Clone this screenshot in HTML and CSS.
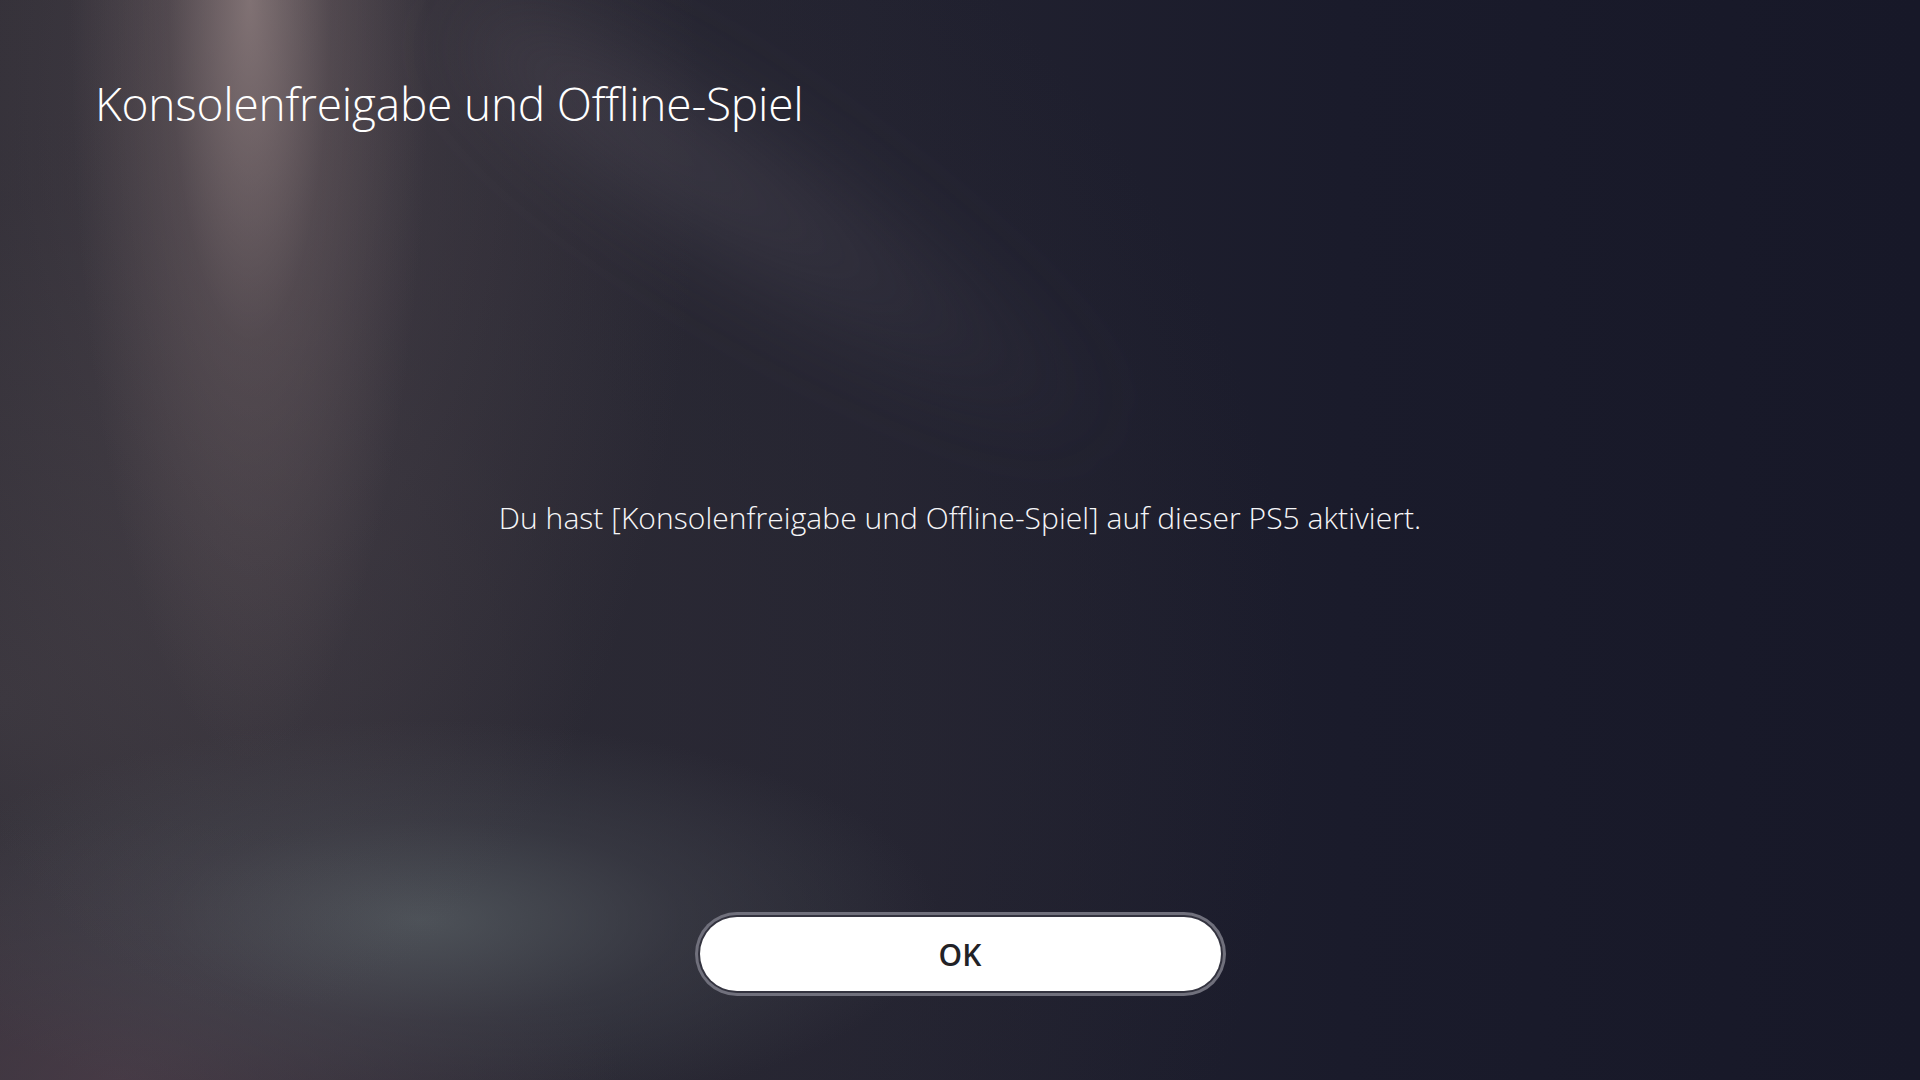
FILE: index.html
```html
<!DOCTYPE html>
<html lang="de">
<head>
<meta charset="utf-8">
<title>Konsolenfreigabe und Offline-Spiel</title>
<link rel="stylesheet" href="styles.css">
</head>
<body>
<div class="screen">
  <header class="header">
    <h1 class="title">Konsolenfreigabe und Offline-Spiel</h1>
  </header>
  <main class="content">
    <p class="message">Du hast [Konsolenfreigabe und Offline-Spiel] auf dieser PS5 aktiviert.</p>
  </main>
  <footer class="actions">
    <button class="ok-button" type="button">OK</button>
  </footer>
</div>
</body>
</html>
```

FILE: styles.css
```css
html, body {
  margin: 0;
  padding: 0;
  width: 1920px;
  height: 1080px;
  overflow: hidden;
}

body {
  position: relative;
  background-color: #1d1d2a;
  background-image:
    radial-gradient(ellipse 180px 760px at 250px 0px, rgba(150, 132, 132, 0.75) 0%, rgba(120, 104, 106, 0.35) 45%, rgba(90, 80, 84, 0) 100%),
    radial-gradient(ellipse 440px 900px at 260px 120px, rgba(110, 96, 100, 0.35) 0%, rgba(80, 72, 80, 0) 100%),
    radial-gradient(ellipse 520px 200px at 420px 920px, rgba(82, 88, 94, 0.85) 0%, rgba(72, 76, 84, 0.4) 50%, rgba(60, 60, 70, 0) 100%),
    radial-gradient(ellipse 500px 260px at 120px 1080px, rgba(80, 64, 76, 0.7) 0%, rgba(70, 60, 72, 0) 100%),
    radial-gradient(ellipse 1300px 1100px at 0px 700px, rgba(58, 54, 62, 1) 0%, rgba(46, 44, 54, 0.6) 45%, rgba(30, 30, 44, 0) 100%),
    linear-gradient(90deg, #2c2a32 0%, #222230 45%, #1a1b2b 70%, #171828 100%);
  font-family: "Open Sans", "Noto Sans", "Liberation Sans", sans-serif;
  color: #ffffff;
}

body::before {
  content: "";
  position: absolute;
  left: 470px;
  top: -70px;
  width: 760px;
  height: 180px;
  border-radius: 50%;
  background: radial-gradient(ellipse at 30% 50%, rgba(110, 102, 112, 0.32) 0%, rgba(80, 76, 90, 0.14) 50%, rgba(60, 60, 74, 0) 75%);
  transform-origin: 0 50%;
  transform: rotate(33deg);
  filter: blur(40px);
  pointer-events: none;
}

.screen {
  position: relative;
  display: flex;
  flex-direction: column;
  height: 1080px;
  box-sizing: border-box;
}

.header {
  padding: 74px 0 0 95px;
}

.title {
  margin: 0;
  font-size: 46px;
  line-height: 58px;
  font-weight: 300;
  letter-spacing: -0.2px;
  color: #ffffff;
}

.content {
  flex: 1;
  display: flex;
  justify-content: center;
  padding-top: 366px;
}

.message {
  margin: 0;
  font-size: 30px;
  line-height: 40px;
  font-weight: 300;
  letter-spacing: 0.05px;
  color: #f6f6f8;
}

.actions {
  display: flex;
  justify-content: center;
  padding-bottom: 89px;
}

.ok-button {
  width: 521px;
  height: 74px;
  border: none;
  border-radius: 37px;
  background: #ffffff;
  box-shadow: 0 0 0 2px #33333f, 0 0 0 5px #70707c;
  font-family: "Open Sans", "Noto Sans", "Liberation Sans", sans-serif;
  font-size: 30px;
  font-weight: 600;
  color: #222226;
  padding: 0;
  cursor: pointer;
}
```
